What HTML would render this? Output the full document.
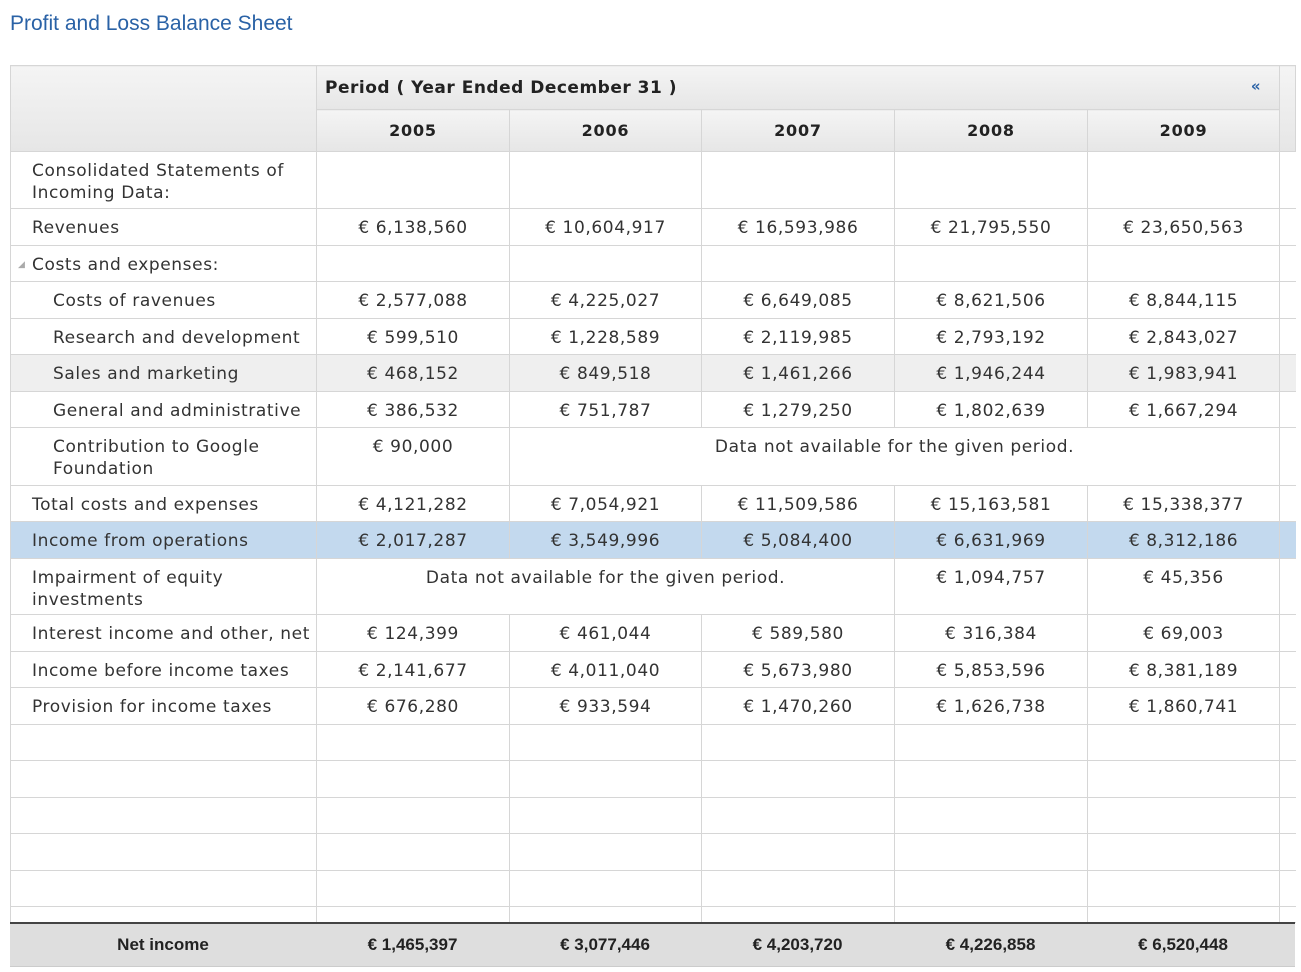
<!DOCTYPE html>
<html><head><meta charset="utf-8"><style>
body{margin:0;background:#fff;font-family:"DejaVu Sans",Verdana,sans-serif;width:1301px;height:972px;overflow:hidden;position:relative}
.title{position:absolute;left:10px;top:12px;font-family:"Liberation Sans",Arial,sans-serif;font-size:21px;color:#2a62a6}
table{position:absolute;left:10px;top:65px;border-collapse:collapse;table-layout:fixed;width:1285px}
td,th{border:1px solid #d6d6d6;padding:0;font-size:17px;color:#333;overflow:hidden;white-space:nowrap}
th{background:linear-gradient(#f4f4f4,#e6e6e6);color:#222;font-weight:bold;font-size:17px;letter-spacing:0.5px}
th.y{font-size:16px;letter-spacing:0.8px}
td{vertical-align:top;padding-top:8px;line-height:22px;text-align:center;letter-spacing:0.6px;box-sizing:border-box}
td.l{text-align:left;padding-left:21px;white-space:normal}
td.l2{text-align:left;padding-left:42px;white-space:normal}
td.s{border-left:1px solid #d6d6d6;border-right:none}
tr.g td{background:#efefef}
tr.b td{background:#c3d9ee}
.foot{position:absolute;left:10px;top:922px;width:1285px;height:42px;background:#dedede;border-top:2px solid #444;border-bottom:1px solid #ccc;font-family:"Liberation Sans",Arial,sans-serif;font-weight:bold;font-size:17px;color:#222}
.foot span{position:absolute;top:11px;text-align:center}
</style></head><body>
<div class="title">Profit and Loss Balance Sheet</div>
<table>
<colgroup><col style="width:306px"><col style="width:193px"><col style="width:192px"><col style="width:193px"><col style="width:193px"><col style="width:192px"><col style="width:16px"></colgroup>
<tr style="height:44px"><th rowspan="2"></th><th colspan="5" style="text-align:left;padding-left:8px;position:relative">Period ( Year Ended December 31 )<span style="position:absolute;right:18px;top:11px;color:#2a62a6;font-size:15px">«</span></th><th rowspan="2"></th></tr>
<tr style="height:42px"><th class="y">2005</th><th class="y">2006</th><th class="y">2007</th><th class="y">2008</th><th class="y">2009</th></tr>
<tr style="height:57px"><td class="l">Consolidated Statements of Incoming Data:</td><td></td><td></td><td></td><td></td><td></td><td class="s"></td></tr>
<tr style="height:37px"><td class="l">Revenues</td><td>€ 6,138,560</td><td>€ 10,604,917</td><td>€ 16,593,986</td><td>€ 21,795,550</td><td>€ 23,650,563</td><td class="s"></td></tr>
<tr style="height:36px"><td class="l" style="position:relative"><span style="position:absolute;left:7px;top:8px;font-size:9px;color:#aaa">◢</span>Costs and expenses:</td><td></td><td></td><td></td><td></td><td></td><td class="s"></td></tr>
<tr style="height:37px"><td class="l2">Costs of ravenues</td><td>€ 2,577,088</td><td>€ 4,225,027</td><td>€ 6,649,085</td><td>€ 8,621,506</td><td>€ 8,844,115</td><td class="s"></td></tr>
<tr style="height:36px"><td class="l2">Research and development</td><td>€ 599,510</td><td>€ 1,228,589</td><td>€ 2,119,985</td><td>€ 2,793,192</td><td>€ 2,843,027</td><td class="s"></td></tr>
<tr class="g" style="height:37px"><td class="l2">Sales and marketing</td><td>€ 468,152</td><td>€ 849,518</td><td>€ 1,461,266</td><td>€ 1,946,244</td><td>€ 1,983,941</td><td class="s"></td></tr>
<tr style="height:36px"><td class="l2">General and administrative</td><td>€ 386,532</td><td>€ 751,787</td><td>€ 1,279,250</td><td>€ 1,802,639</td><td>€ 1,667,294</td><td class="s"></td></tr>
<tr style="height:58px"><td class="l2">Contribution to Google Foundation</td><td>€ 90,000</td><td colspan="4">Data not available for the given period.</td><td class="s"></td></tr>
<tr style="height:36px"><td class="l">Total costs and expenses</td><td>€ 4,121,282</td><td>€ 7,054,921</td><td>€ 11,509,586</td><td>€ 15,163,581</td><td>€ 15,338,377</td><td class="s"></td></tr>
<tr class="b" style="height:37px"><td class="l">Income from operations</td><td>€ 2,017,287</td><td>€ 3,549,996</td><td>€ 5,084,400</td><td>€ 6,631,969</td><td>€ 8,312,186</td><td class="s"></td></tr>
<tr style="height:56px"><td class="l">Impairment of equity investments</td><td colspan="3">Data not available for the given period.</td><td>€ 1,094,757</td><td>€ 45,356</td><td class="s"></td></tr>
<tr style="height:37px"><td class="l">Interest income and other, net</td><td>€ 124,399</td><td>€ 461,044</td><td>€ 589,580</td><td>€ 316,384</td><td>€ 69,003</td><td class="s"></td></tr>
<tr style="height:36px"><td class="l">Income before income taxes</td><td>€ 2,141,677</td><td>€ 4,011,040</td><td>€ 5,673,980</td><td>€ 5,853,596</td><td>€ 8,381,189</td><td class="s"></td></tr>
<tr style="height:37px"><td class="l">Provision for income taxes</td><td>€ 676,280</td><td>€ 933,594</td><td>€ 1,470,260</td><td>€ 1,626,738</td><td>€ 1,860,741</td><td class="s"></td></tr>
<tr style="height:36px"><td></td><td></td><td></td><td></td><td></td><td></td><td class="s"></td></tr>
<tr style="height:37px"><td></td><td></td><td></td><td></td><td></td><td></td><td class="s"></td></tr>
<tr style="height:36px"><td></td><td></td><td></td><td></td><td></td><td></td><td class="s"></td></tr>
<tr style="height:37px"><td></td><td></td><td></td><td></td><td></td><td></td><td class="s"></td></tr>
<tr style="height:36px"><td></td><td></td><td></td><td></td><td></td><td></td><td class="s"></td></tr>
<tr style="height:16px"><td style="padding:0"></td><td style="padding:0"></td><td style="padding:0"></td><td style="padding:0"></td><td style="padding:0"></td><td style="padding:0"></td><td class="s" style="padding:0"></td></tr>
</table>
<div class="foot">
<span style="left:0;width:306px">Net income</span>
<span style="left:306px;width:193px">€ 1,465,397</span>
<span style="left:499px;width:192px">€ 3,077,446</span>
<span style="left:691px;width:193px">€ 4,203,720</span>
<span style="left:884px;width:193px">€ 4,226,858</span>
<span style="left:1077px;width:192px">€ 6,520,448</span>
</div>
</body></html>
